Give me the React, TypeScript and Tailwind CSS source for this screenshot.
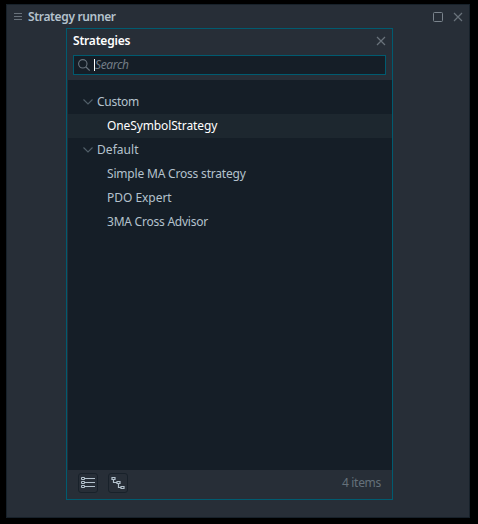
import React from 'react';

const CloseIcon = () => (
  <svg width="10" height="10" viewBox="0 0 10 10" fill="none" stroke="#69727b" strokeWidth="1.2">
    <path d="M1 1L9 9M9 1L1 9" />
  </svg>
);

function Group({ label, tracking }: { label: string; tracking: string }) {
  return (
    <div className="flex h-6 items-center pl-[15px] text-[#b4c2cd]">
      <svg width="10" height="6" viewBox="0 0 10 6" fill="none" stroke="#52606a" strokeWidth="1.1">
        <path d="M0.5 0.5L5 5L9.5 0.5" />
      </svg>
      <span className={`ml-1 ${tracking}`}>{label}</span>
    </div>
  );
}

function Item({ label, tracking, selected }: { label: string; tracking: string; selected?: boolean }) {
  return (
    <div className={`flex h-6 items-center pl-[39px] ${selected ? 'bg-[#1d272f] text-white' : 'text-[#b4c2cd]'}`}>
      <span className={tracking}>{label}</span>
    </div>
  );
}

export default function App() {
  return (
    <div className="h-[524px] w-[478px] bg-black pt-1 pl-1.5 font-['Noto_Sans','Open_Sans',sans-serif] text-[12px] leading-4 whitespace-nowrap">
      <div className="flex h-[514px] w-[464px] flex-col border border-[#17212a] bg-[#272e37]">
        <header className="flex h-[23px] shrink-0 items-center pr-1.5 pl-[7px]">
          <svg width="8" height="7" viewBox="0 0 8 7" stroke="#69727b">
            <path d="M0 0.5H8M0 3.5H8M0 6.5H8" />
          </svg>
          <h1 className="ml-1.5 font-semibold tracking-[-0.35px] text-[#b4c2cd]">Strategy runner</h1>
          <div className="ml-auto flex items-center gap-2.5">
            <svg width="10" height="10" viewBox="0 0 10 10" fill="none" stroke="#7b848d">
              <rect x="0.5" y="0.5" width="9" height="9" rx="1" />
            </svg>
            <CloseIcon />
          </div>
        </header>

        <section className="ml-[59px] flex h-[472px] w-[327px] flex-col border border-[#005b70] bg-[#272e37]">
          <div className="flex h-[23px] shrink-0 items-center pr-1.5 pl-1.5">
            <h2 className="font-semibold tracking-[-0.2px] text-white">Strategies</h2>
            <div className="ml-auto">
              <CloseIcon />
            </div>
          </div>
          <div className="mt-[3px] ml-1.5 flex h-5 w-[313px] shrink-0 items-center border border-[#005b70] bg-[#151e27] pl-1">
            <svg width="12" height="12" viewBox="0 0 12 12" fill="none" stroke="#69747e" strokeWidth="1.1">
              <circle cx="4.8" cy="4.8" r="4.2" />
              <path d="M8 8L11.7 11.5" />
            </svg>
            <span className="ml-1 h-3 w-px bg-white" />
            <span className="tracking-[-0.35px] text-[#727c85] italic">Search</span>
          </div>
          <div className="mt-[5px] ml-px h-[390px] shrink-0 bg-[#151e27] pt-[10px]">
            <Group label="Custom" tracking="tracking-[-0.25px]" />
            <Item label="OneSymbolStrategy" tracking="tracking-[-0.12px]" selected />
            <Group label="Default" tracking="tracking-[0.05px]" />
            <Item label="Simple MA Cross strategy" tracking="tracking-[-0.19px]" />
            <Item label="PDO Expert" tracking="tracking-[-0.03px]" />
            <Item label="3MA Cross Advisor" tracking="tracking-[-0.23px]" />
          </div>
          <footer className="flex flex-1 items-center pr-[11px] pb-[3px] pl-[11px]">
            <button className="flex size-5 items-center justify-center rounded-[3px] border border-[#18212a]">
              <svg width="14" height="12" viewBox="0 0 14 12" fill="none" stroke="#b4c2cd">
                <path d="M0.5 0.5h3v2h-3zM0.5 4.5h3v2h-3zM0.5 8.5h3v2h-3zM4 1.5h10M4 5.5h10M4 9.5h10" />
              </svg>
            </button>
            <button className="ml-2.5 flex size-5 items-center justify-center rounded-[3px] border border-[#18212a]">
              <svg width="14" height="12" viewBox="0 0 14 12" fill="none" stroke="#b4c2cd">
                <path d="M1 0.5h3v2h-3zM6 4.5h3v2h-3zM10 9.5h3v2h-3zM2.5 3v2.5h3M7.5 7v3.5h2.5" strokeWidth="1.2" />
              </svg>
            </button>
            <span className="ml-auto tracking-[-0.3px] text-[#65717a]">4 items</span>
          </footer>
        </section>
      </div>
    </div>
  );
}
